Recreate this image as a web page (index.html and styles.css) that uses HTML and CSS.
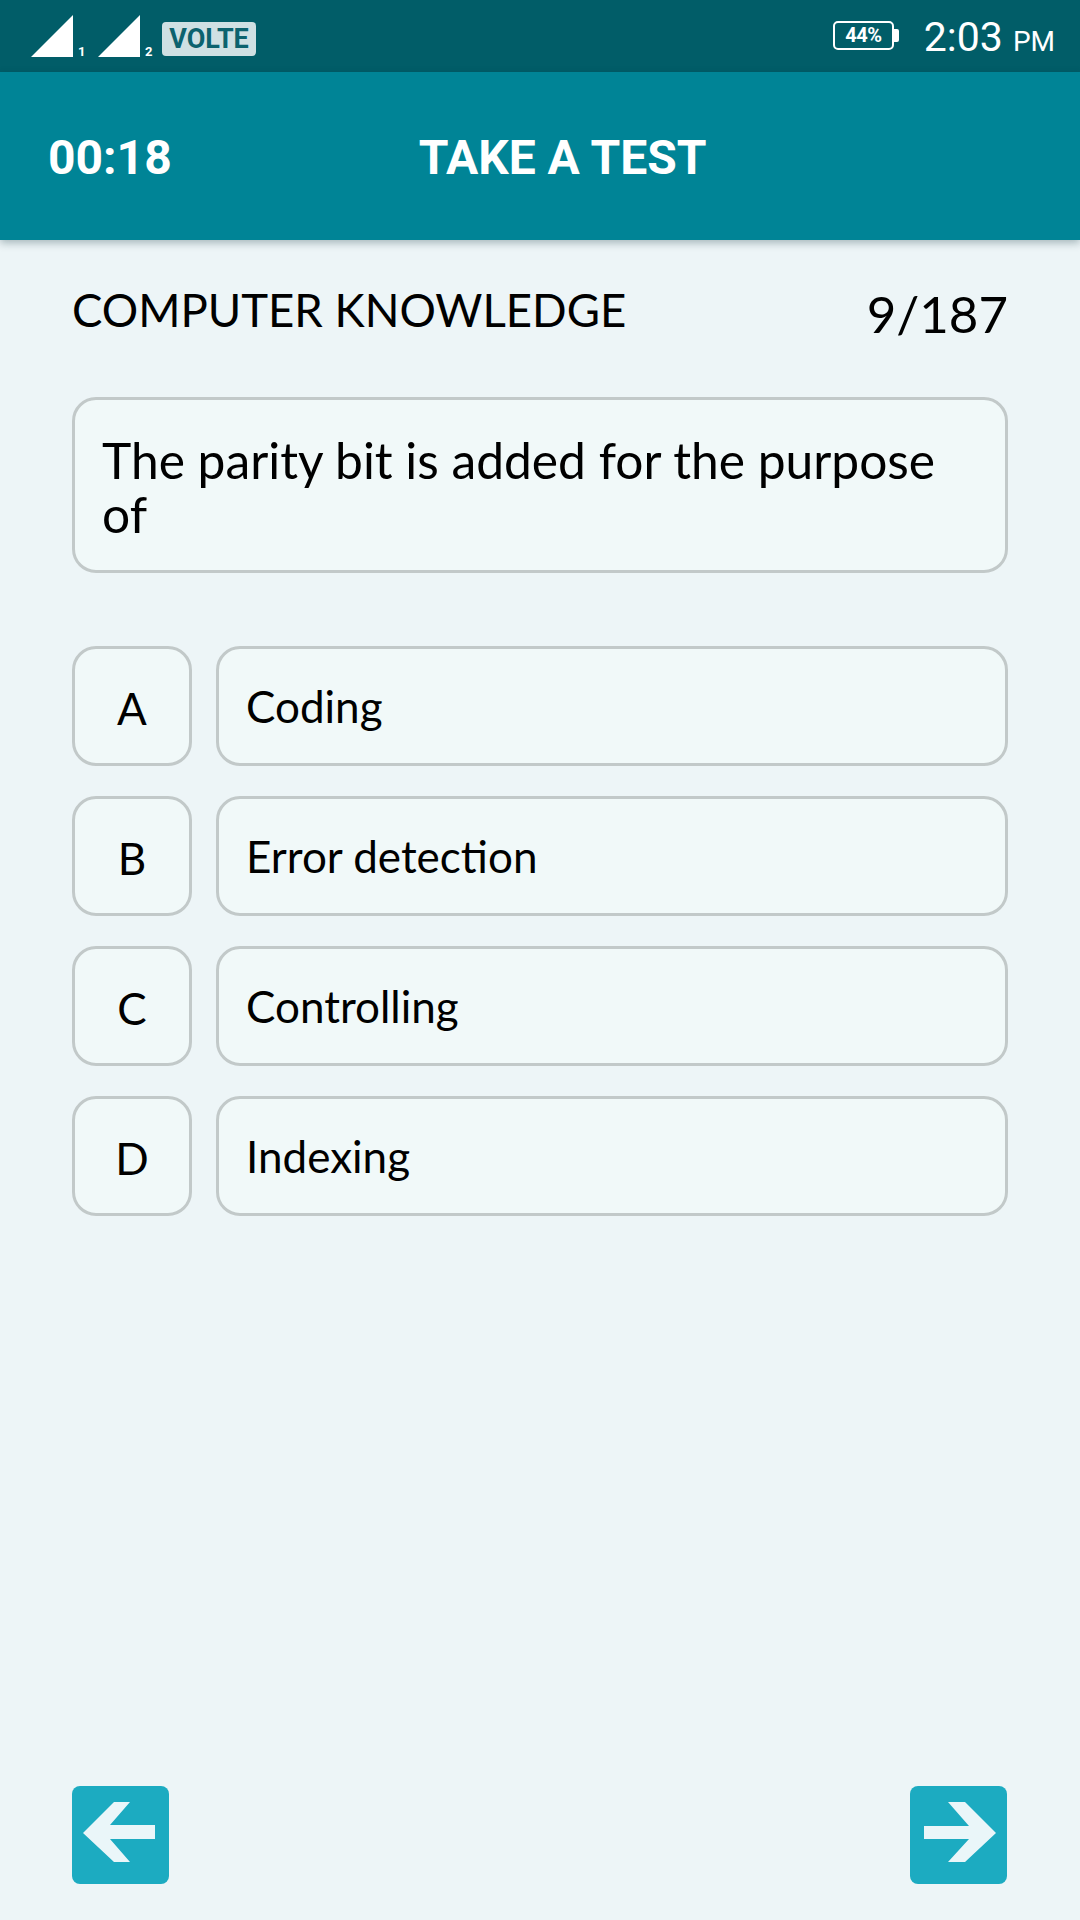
FILE: index.html
```html
<!DOCTYPE html>
<html lang="en">
<head>
<meta charset="utf-8">
<title>Take a test</title>
<link rel="stylesheet" href="styles.css">
</head>
<body>
<div class="screen">
  <div class="status">
    <div class="status-left">
      <svg class="signal" viewBox="0 0 42 42"><polygon points="0,42 42,0 42,42"/></svg><span class="sim">1</span>
      <svg class="signal signal2" viewBox="0 0 42 42"><polygon points="0,42 42,0 42,42"/></svg><span class="sim">2</span>
      <span class="volte">VOLTE</span>
    </div>
    <div class="status-right">
      <div class="battery">44%</div>
      <div class="clock">2:03<span class="ampm">PM</span></div>
    </div>
  </div>
  <header class="appbar">
    <span class="timer">00:18</span>
    <span class="title">TAKE A TEST</span>
  </header>
  <main class="content">
    <div class="meta">
      <span class="subject">COMPUTER KNOWLEDGE</span>
      <span class="count">9/187</span>
    </div>
    <div class="question">The parity bit is added for the purpose of</div>
    <div class="options">
      <div class="option"><div class="letter">A</div><div class="answer">Coding</div></div>
      <div class="option"><div class="letter">B</div><div class="answer">Error detection</div></div>
      <div class="option"><div class="letter">C</div><div class="answer">Controlling</div></div>
      <div class="option"><div class="letter">D</div><div class="answer">Indexing</div></div>
    </div>
    <div class="nav">
      <div class="navbtn"><svg viewBox="0 0 97 98"><polygon points="11,47 42,16 58,16 38,39 83,39 83,53 38,53 58,76 42,76"/></svg></div>
      <div class="navbtn"><svg viewBox="0 0 97 98"><polygon points="86,47 55,16 38,16 59,40 14,40 14,53 59,53 38,76 55,76"/></svg></div>
    </div>
  </main>
</div>
</body>
</html>
```
FILE: styles.css
```css
* { box-sizing: border-box; }
html, body { margin: 0; padding: 0; }
body { width: 1080px; height: 1920px; overflow: hidden; font-family: "Lato", "Liberation Sans", sans-serif; color: #000; background: #edf5f7; }
.screen { width: 1080px; height: 1920px; display: flex; flex-direction: column; }

.status { height: 72px; flex: none; background: #015d68; display: flex; justify-content: space-between; padding: 0 25px 0 31px; color: #fff; font-family: "Roboto", sans-serif; }
.status-left { display: flex; align-items: flex-start; padding-top: 15px; }
.signal { width: 42px; height: 42px; fill: #fff; display: block; }
.signal2 { margin-left: 12px; }
.sim { font-size: 13px; font-weight: 700; line-height: 12px; margin: 31px 0 0 5px; width: 8px; }
.volte { margin: 7px 0 0 9px; width: 94px; height: 34px; border-radius: 4px; background: #cfe0e3; color: #0c626e; font-size: 27px; font-weight: 700; line-height: 34px; text-align: center; }
.status-right { display: flex; align-items: flex-start; }
.battery { position: relative; margin-top: 21px; width: 61px; height: 29px; border: 2px solid #fff; border-radius: 5px; font-size: 20px; font-weight: 700; line-height: 25px; text-align: center; letter-spacing: -0.5px; }
.battery::after { content: ""; position: absolute; right: -7px; top: 6px; width: 5px; height: 13px; background: #fff; border-radius: 0 2px 2px 0; }
.clock { margin: 13px 0 0 30px; font-size: 41px; font-weight: 400; line-height: 48px; }
.ampm { font-size: 28px; font-weight: 400; margin-left: 10px; }

.appbar { height: 168px; flex: none; background: #008496; color: #fff; font-family: "Roboto", sans-serif; font-weight: 700; font-size: 48px; display: flex; align-items: center; gap: 247px; padding: 2px 0 0 48px; box-shadow: 0 3px 8px rgba(0, 40, 50, 0.3); position: relative; }

.content { flex: 1; display: flex; flex-direction: column; padding: 0 72px 36px; }
.meta { display: flex; justify-content: space-between; align-items: flex-start; height: 157px; padding-top: 42px; }
.subject { font-size: 45.5px; line-height: 56px; }
.count { font-size: 51px; line-height: 64px; }
.question { height: 176px; border: 3px solid #c2c9c9; border-radius: 24px; background: #f1f9f9; padding: 34px 27px 0; font-size: 49.7px; line-height: 53.5px; }
.options { display: flex; flex-direction: column; gap: 30px; margin-top: 73px; }
.option { display: flex; gap: 24px; height: 120px; }
.letter, .answer { border: 3px solid #c2c9c9; border-radius: 24px; background: #f1f9f9; display: flex; align-items: center; font-size: 44px; }
.letter { width: 120px; flex: none; justify-content: center; padding-top: 4px; }
.answer { flex: 1; padding-left: 27px; }
.nav { margin-top: auto; display: flex; justify-content: space-between; padding-right: 1px; }
.navbtn { width: 97px; height: 98px; border-radius: 8px; background: #1cabc1; }
.navbtn svg { display: block; width: 97px; height: 98px; fill: #eaf6f9; }
```
